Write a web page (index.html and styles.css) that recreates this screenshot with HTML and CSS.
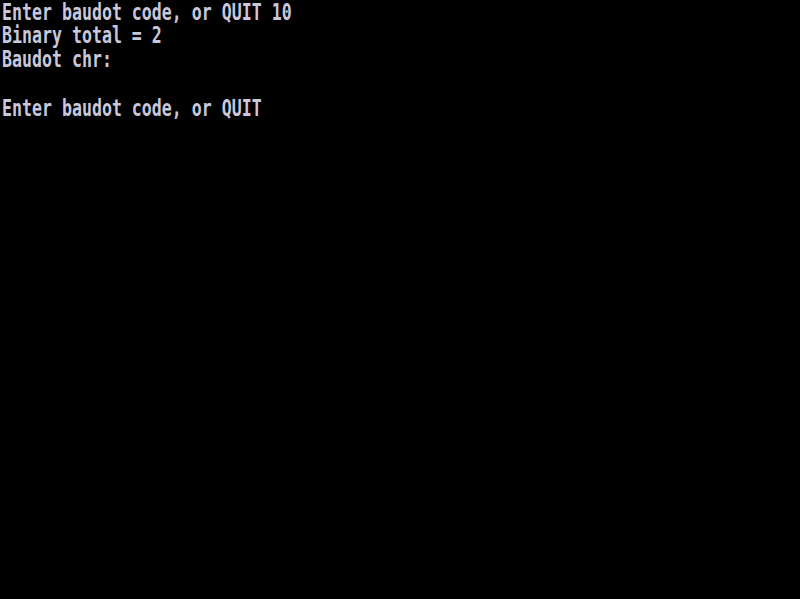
FILE: index.html
```html
<!DOCTYPE html>
<html>
<head>
<meta charset="utf-8">
<link rel="stylesheet" href="styles.css">
</head>
<body>
<pre class="screen">Enter baudot code, or QUIT 10
Binary total = 2
Baudot chr:

Enter baudot code, or QUIT</pre>
</body>
</html>
```
FILE: styles.css
```css
html, body {
  margin: 0;
  padding: 0;
  background: #000;
  width: 800px;
  height: 599px;
  overflow: hidden;
}
.screen {
  margin: 0;
  padding: 0 0 0 2px;
  font-family: "DejaVu Sans Mono", monospace;
  font-size: 16.6px;
  font-weight: bold;
  line-height: 17.14px;
  color: #c8c8dc;
  transform: scale(1, 1.4);
  transform-origin: 0 0;
}
```
